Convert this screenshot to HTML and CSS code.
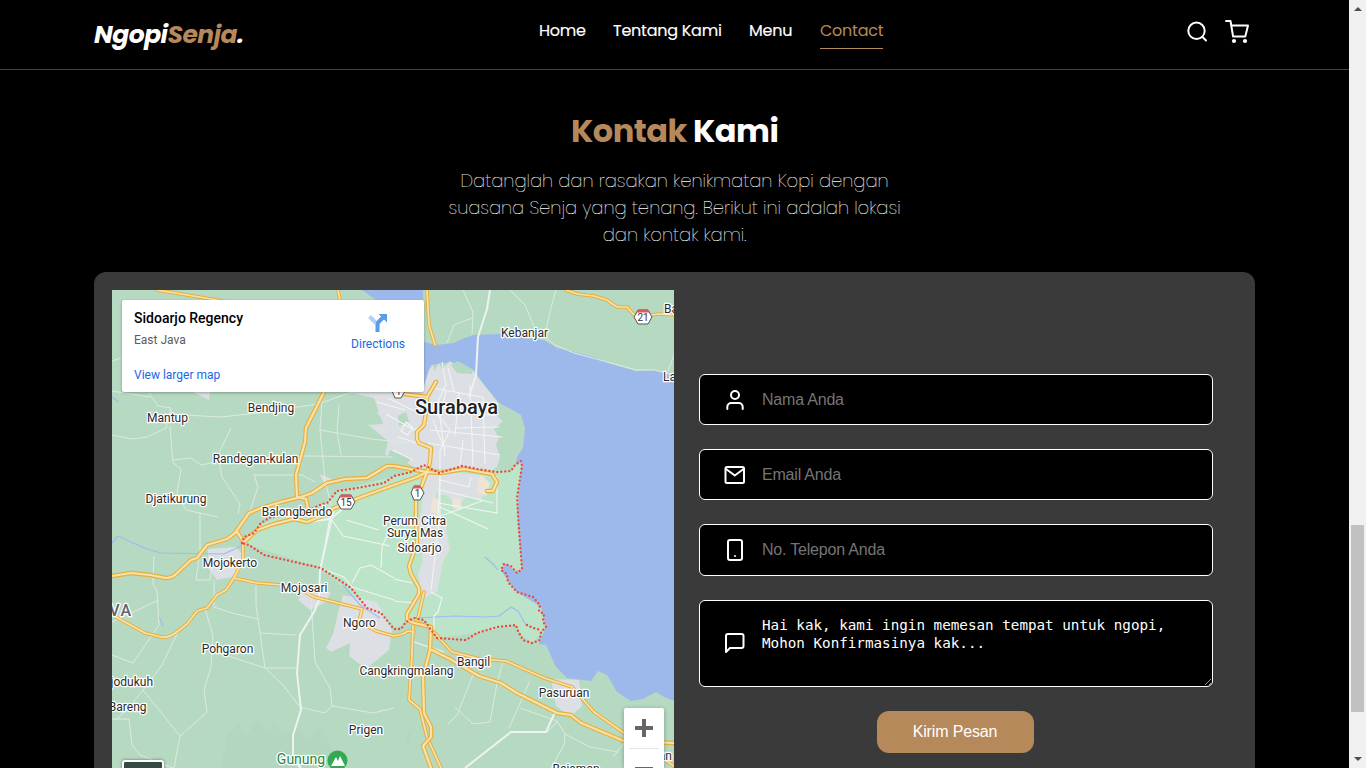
FILE: index.html
```html
<!DOCTYPE html>
<html lang="id">
<head>
<meta charset="utf-8">
<title>NgopiSenja</title>
<link rel="stylesheet" href="styles.css">
</head>
<body>
<div class="page">
  <header class="navbar">
    <a class="logo"><span>Ngopi</span><span class="accent">Senja</span><span>.</span></a>
    <nav class="links">
      <a class="home">Home</a><a class="about">Tentang Kami</a><a class="menu">Menu</a><a class="contact">Contact</a>
    </nav>
    <div class="tools">
      <svg width="24" height="24" viewBox="0 0 24 24" class="icon"><circle cx="10.500" cy="10.800" r="8.200"/><path d="M20 20.500l-3.700-3.800"/></svg>
      <svg width="26" height="26" viewBox="0 0 26 26" class="icon"><path d="M1 2h4.500l2.600 15.500h12.200L23 6.500H6.500"/><circle class="solid" cx="9" cy="22" r="1.100"/><circle class="solid" cx="20" cy="22" r="1.100"/></svg>
    </div>
  </header>
  <main class="section">
    <h2><span class="accent kontak">Kontak</span><span class="kami">Kami</span></h2>
    <p class="intro"><span>Datanglah dan rasakan kenikmatan Kopi dengan</span><span>suasana Senja yang tenang. Berikut ini adalah lokasi</span><span>dan kontak kami.</span></p>
    <div class="card">
      <div class="map">
        <svg class="canvas" width="562" height="478" viewBox="112 290 562 478">
          <defs>
            <g id="highways">
              <path d="M112 576L131 573L150 575L166 578Q173 578 178 572L191 560L197 558L207 545L227 539L235 533L249 513L261 508L281 502L301 497L312 493L327 483L345 479L367 478L387 466H394L427 472L441 473L464 469L492 474L497 482L493 491H487"/>
              <path d="M326 388L306 428L305 442L296 475L297 497L306 499L308 509"/>
              <path d="M237 532L244 542L257 530L274 524L294 519L307 522L325 515L334 508L361 497L394 485L417 477L427 472"/>
              <path d="M436 382L427 397L426 412L424 425L417 432V439L419 443L431 448L430 462L427 472L422 485L416 496V520L417 543L409 566L411 574L419 588V594L407 614V620L414 623L431 627L430 650L423 677L424 713L431 727V737L423 746L431 768M396 393L427 397"/>
              <path d="M432 650L450 659L479 676L501 683L517 693L557 713L571 715L581 723L624 741L674 743"/>
            </g>
            <g id="mainroads">
              <path d="M116 617L145 633L161 637Q170 638 178 631L187 624L197 611L207 608L217 595L226 590L234 578L243 560L243 540M234 578L257 583L294 586L314 597L362 609L359 622L376 631L394 636L403 634L408 631L414 632"/>
              <path d="M431 629L452 652L480 659L506 661L544 678L572 687L594 712L624 733L674 766M413 625L412 655L409 700L420 709L427 737L441 768M424 592L417 622"/>
              <path d="M157 290L217 300L240 305M338 290L341 305M427 290L429 325L435 345M566 290L577 294L594 296L607 300L617 307L627 307L634 315H648L661 314L674 315"/>
            </g>
            <path id="border" d="M242 543L244 537L254 533L261 523L271 517L300 514L322 504L327 503L337 491L357 488L384 483L394 476L411 472L424 465L439 473L462 466L477 469L497 472L511 471L515 465L521 461L522 466L517 498L519 530L522 569L517 573L511 566L504 564L501 570L507 574L508 582L517 592L533 597L540 605L539 611L544 614L543 621L546 627L541 632L540 640L532 643L523 640L518 631L516 625L497 627L477 633L466 640L437 638L429 627L424 620L414 618L406 622L401 629H394L381 613L367 608L351 588L321 568L264 555L249 545ZM527 625L533 628L541 630"/>
          </defs>
          <path class="land" d="M112 290h562v478H112z"/>
          <path class="hill" d="M220 768l8-32 10-12 9 12 10-19 9 15 8-11 8 15 14-9 13 12 12-13 9 18 10 24zM345 650l20-8 11 18-18 5zM404 739l8-11-2 19z"/>
          <path class="sidoarjo" d="M242 543L244 537L254 533L261 523L322 504L337 491L394 476L424 465L439 473L462 466L511 471L521 461L519 530L522 569L501 570L517 592L540 605L546 627L532 643L518 631L516 625L477 633L437 638L424 620L406 622L394 629L367 608L321 568Z"/>
          <path class="water" d="M362 290H423L424 342L436 345L454 343L462 339L474 335L501 334L544 340L557 348L574 352L594 357L611 364L636 371L654 370L674 375V701L664 697L656 692L643 699L631 701L617 692L607 675L598 671L591 681L567 678L556 667L546 645L539 644L546 627L541 607L517 592L506 578L501 570L506 563L517 573L522 570L517 510L522 462L516 464L517 457L523 448L525 428L521 415L507 407L499 403L491 393L482 382L474 370L451 362L431 365L426 380L424 388L400 380L376 300Z"/>
          <path class="city" d="M424 386L429 370L433 365L434 371L439 363L442 369L450 361L456 367L472 370L484 385L499 404L496 415L503 421L494 429L499 438L496 445L500 457L497 467L488 473L414 467L399 458L385 455L388 441L368 425L383 424L374 398L348 392L394 391Z"/>
          <path class="city" d="M426 473L445 471L486 476L482 500L468 496L457 505L449 497L436 492L438 520L445 523L450 549L443 562L437 592L423 598L418 574L423 561L418 533ZM208 549L236 547L246 558L232 577L217 580L208 568ZM302 593L331 592L326 602L310 610L298 600ZM343 595L377 602L392 630L389 650L366 669L349 656L350 643L331 652L326 648L333 634L338 613ZM551 679L579 680L582 706L570 717L556 706ZM193 392h17l-1 8zM320 474l12 5-7 7zM394 397l-17 16 16 16z"/>
          <path class="land" d="M451 365L458 361L472 369V374L457 373ZM398 416l8-4 3 10-10 4zM390 450l21 9-8 8-18-4z"/>
          <path class="sand" d="M480 475l10 8-4 13-10-4zM452 497l10 3-2 10-7-2zM432 497l8 3-2 14-7-2z"/>
          <path class="stream" d="M112 543L118 536L131 542L147 549L161 553L224 554L241 546M415 618L455 616L486 617L499 616L511 607L518 611L526 625M485 557l9 8 4 5M343 585l17 20 20 13M112 397l7 5M159 617l4 9"/>
          <g class="small">
            <path d="M112 361L121 358M112 391L150 397M149 393L158 406L171 408L166 428L147 437L132 439L112 435M184 415L221 417L258 413L318 404L355 391L400 372M231 428L218 455L222 477L240 504L238 514M170 426L173 463L181 469L177 493L186 510L218 517M173 460L191 458L201 465L226 460L288 456L310 456L392 457M254 475L302 475L315 482M254 475L258 487L250 511M322 401L320 430L325 480L331 505M339 405L337 432L341 455M320 430L371 439L409 443"/>
            <path d="M200 512V552L196 580L210 580L212 567M154 556L153 584L157 591L159 625L133 663L112 655M112 622L159 600M178 632L162 665L143 690L128 709L115 720M112 719L129 719L132 745L140 755L173 768M143 690L180 736L174 768M180 736L207 712L204 690L211 667L213 636L205 608M214 580V607L232 613L258 619M256 582V605L265 668L296 668M216 652L265 668L283 685L300 707L325 713L332 706L373 713L394 708M311 600L315 662L330 688L332 706M261 633L296 635"/>
            <path d="M463 290L473 312L472 334M447 343L454 325L472 318M510 290L525 305L535 329L555 345M556 290L551 308L546 330M555 345L574 353L611 363L636 370L654 370L674 375M674 355L668 371M503 662L497 683L490 722L473 724L455 707M448 724L457 715L475 670M530 681L509 728M520 708L557 721L565 734L564 745L551 768M565 734L590 747L618 752M624 743L613 757M557 722L547 732"/>
          </g>
          <g class="street">
            <path d="M430 430L502 437M433 420L445 450M446 391L440 418L445 456M459 392L455 435M470 385L473 465M483 397L485 464M438 407L496 416M428 443L500 455M433 388L482 397M448 368L454 391M386 414L414 430L428 423M388 398L414 411M398 437L417 443M406 422l7 6-5 7-7-4zM377 402l28 8M393 450l20 10M440 480L469 487L471 477M441 490L493 503M438 503L497 513M497 476V514M456 428L499 427M463 440L460 465M346 520L379 530M394 520L382 547L381 568"/>
            <path d="M321 568L330 517L335 510M330 517L343 536L390 546M320 568L344 577L352 587L394 600M352 583L360 568L371 565L394 578M440 476V515L431 590M431 592L442 598L438 612L434 616V630M394 579L412 583M414 642L444 652M416 603L394 601M435 518L482 501M440 507L488 529"/>
            <path d="M442 362L446 385L434 410L450 430L440 451V474L438 518"/>
          </g>
          <path class="avenue" d="M490 290L487 309L478 337L476 375L469 397M320 570L319 600L314 612L300 635L297 673L301 710L293 735V760L301 768M465 768L511 732H546L556 710M307 522L330 519L344 508M334 508L320 570"/>
          <use href="#mainroads" class="casing thin"/><use href="#mainroads" class="fill thin-fill"/>
          <use href="#highways" class="casing"/><use href="#highways" class="fill"/>
          <use href="#border" class="boundary"/>
          <g class="shield">
            <path d="M638 310h10l4 7-4 7h-10l-4-7z"/><path class="red" d="M638 310h10l1 2h-12z"/><text x="643" y="321">21</text>
            <path d="M341 495h10l4 7-4 7h-10l-4-7z"/><path class="red" d="M341 495h10l1 2h-12z"/><text x="346" y="506">15</text>
            <path d="M414 486h6l4 7-4 7h-6l-3-7z"/><path class="red" d="M414 486h6l1 2h-8z"/><text x="417.500" y="497">1</text>
            <path d="M395 384h6l4 7-4 7h-6l-3-7z"/><text x="398.500" y="395">1</text>
          </g>
          <g class="places">
            <text x="524.500" y="337">Kebanjar</text><text x="167.500" y="422">Mantup</text><text x="271" y="412">Bendjing</text><text x="255.500" y="463">Randegan-kulan</text><text x="176" y="503">Djatikurung</text><text x="297" y="516">Balongbendo</text><text x="230" y="567">Mojokerto</text><text x="304" y="592">Mojosari</text><text x="359.500" y="627">Ngoro</text><text x="227.500" y="653">Pohgaron</text><text x="406.500" y="675">Cangkringmalang</text><text x="473.500" y="666">Bangil</text><text x="564" y="697">Pasuruan</text><text x="366" y="734">Prigen</text><text x="414.500" y="525">Perum Citra</text><text x="415" y="537">Surya Mas</text><text x="419.500" y="552">Sidoarjo</text><text x="576" y="773">Bajaman</text>
            <text class="start" x="664" y="313">Ba</text><text class="start" x="663" y="381">La</text><text class="end" x="153" y="686">jodukuh</text><text class="end" x="146.500" y="711">Bareng</text><text class="end" x="672" y="760">an</text>
            <text class="city-name" x="456.500" y="414">Surabaya</text><text class="island end" x="132.500" y="616">VA</text><text class="mountain" x="301" y="764">Gunung</text>
          </g>
          <circle cx="337.500" cy="760.500" r="10" class="peak"/><path class="snow" d="M331 766l5-9 2 4 2-5 5 10z"/>
        </svg>
        <div class="place-card">
          <div><strong>Sidoarjo Regency</strong><span class="region">East Java</span><a>View larger map</a></div>
          <div class="directions"><svg width="20" height="20" viewBox="0 0 20 20"><path d="M1.500 3.500l7 7" stroke="#b3d0f6" stroke-width="4" fill="none"/><path d="M9.500 19v-7q0-2 1.500-3.500L15.500 4" stroke="#5b9be8" stroke-width="4" fill="none"/><path d="M10.500 1H19v8.500z" fill="#5b9be8"/></svg><a>Directions</a></div>
        </div>
        <div class="zoom"><svg width="40" height="60" viewBox="0 0 40 60"><path d="M20 11v18M11 20h18M11 61h18" stroke="#666" stroke-width="4"/><path d="M5 40.500h30" stroke="#e6e6e6"/></svg></div>
        <div class="satellite"></div>
      </div>
      <form class="form">
        <label class="field"><svg width="24" height="24" viewBox="0 0 24 24" class="icon"><path d="M19.700 21v-2a4 4 0 0 0-4-4H8.300a4 4 0 0 0-4 4v2"/><circle cx="12" cy="7" r="4"/></svg><input placeholder="Nama Anda"></label>
        <label class="field"><svg width="24" height="24" viewBox="0 0 24 24" class="icon"><rect x="2.500" y="4" width="18.500" height="16" rx="1.500"/><path d="M20.500 6l-8.700 6.500L3 6"/></svg><input placeholder="Email Anda"></label>
        <label class="field phone"><svg width="24" height="24" viewBox="0 0 24 24" class="icon"><rect x="5" y="2" width="14" height="20" rx="2"/><path d="M12 18h.01"/></svg><input placeholder="No. Telepon Anda"></label>
        <div class="field message"><svg width="24" height="24" viewBox="0 0 24 24" class="icon"><path d="M20.500 14a2 2 0 0 1-2 2H7l-4 4V4a2 2 0 0 1 2-2h13.500a2 2 0 0 1 2 2z"/></svg><textarea spellcheck="false">Hai kak, kami ingin memesan tempat untuk ngopi,
Mohon Konfirmasinya kak...</textarea></div>
        <button type="button">Kirim Pesan</button>
      </form>
    </div>
  </main>
</div>
<div class="scrollbar"><i class="up"></i><i class="thumb"></i><i class="down"></i></div>
</body>
</html>
```

FILE: styles.css
```css
* { box-sizing: border-box; }
body { margin: 0; width: 1366px; height: 768px; overflow: hidden; display: flex; background: #000; color: #fff; font-family: Poppins, Inter, sans-serif; }
.page { width: 1349px; height: 768px; overflow: hidden; }
.accent { color: #b6895b; }
.icon { fill: none; stroke: #fff; stroke-width: 2; stroke-linecap: round; stroke-linejoin: round; flex: none; }
.icon .solid { fill: #fff; }

.navbar { height: 70px; border-bottom: 1px solid #513d28; padding: 0 98px 0 94px; display: flex; justify-content: space-between; }
.logo { width: 149px; padding-top: 17px; font-size: 25px; line-height: 36px; font-weight: 700; font-style: italic; display: flex; letter-spacing: -.52px; }
.links { display: flex; font-size: 16px; line-height: 24px; padding: 19px 7px 0 0; letter-spacing: -.25px; -webkit-text-stroke: .15px #fff; }
.links a { height: 30px; white-space: nowrap; margin-right: 27px; }
.links .home { width: 47px; }
.links .about { width: 109px; }
.links .menu { width: 43px; margin-right: 28px; }
.links .contact { width: 63px; margin-right: 0; color: #b6895b; border-bottom: 1px solid #b6895b; -webkit-text-stroke: 0; }
.tools { display: flex; gap: 15px; padding-top: 19px; }
.tools svg:first-child { margin-top: 1px; }

h2 { margin: 0; padding-top: 37px; height: 97px; font-size: 32px; line-height: 48px; font-weight: 700; letter-spacing: -.5px; display: flex; justify-content: center; gap: 7px; }
.kontak { width: 115px; }
.kami { width: 85px; }
.intro { margin: 0; height: 105px; display: flex; flex-direction: column; align-items: center; font-size: 18px; line-height: 27px; font-weight: 200; color: #fff; white-space: nowrap; -webkit-text-stroke: .1px #fff; }

.card { margin: 0 94px; height: 560px; padding: 18px; background: #3a3a3a; border-radius: 12px; display: flex; }
.map { position: relative; width: 562px; height: 478px; flex: none; overflow: hidden; font-family: Roboto, sans-serif; }
.canvas { display: block; }
.land { fill: #b6d9c2; }
.hill { fill: #acd2bb; opacity: .3; }
.sidoarjo { fill: #bce4c9; }
.water { fill: #9db9ec; }
.city { fill: #dcdfe3; }
.sand { fill: #eee4d5; }
.stream, .small, .street, .avenue { fill: none; stroke-linejoin: round; }
.stream { stroke: #9dbcf0; stroke-width: 1.2; }
.small { stroke: #dcebe2; stroke-width: 1; }
.street { stroke: #f2f5f4; stroke-width: 1.1; }
.avenue { stroke: #edf3f0; stroke-width: 2; }
.casing, .fill { fill: none; stroke-linejoin: round; stroke-linecap: round; }
.casing { stroke: #e9ae37; stroke-width: 4.4; }
.fill { stroke: #f8e2ac; stroke-width: 2.2; }
.thin { stroke-width: 3.6; }
.thin-fill { stroke-width: 1.7; }
.boundary { fill: none; stroke: #ea4b3f; stroke-width: 2.4; stroke-linecap: round; stroke-dasharray: 0 4; }
.shield path { fill: #fff; stroke: #555; stroke-width: 1; }
.shield .red { fill: #d95c5c; stroke: #d95c5c; }
.shield text { font-size: 10px; fill: #333; text-anchor: middle; }
.places text { font-size: 12px; fill: #2b2b2b; text-anchor: middle; stroke: #fff; stroke-width: 2.5px; stroke-linejoin: round; paint-order: stroke; }
.places .start { text-anchor: start; }
.places .end { text-anchor: end; }
.places .city-name { font-size: 20px; font-weight: 500; fill: #202124; }
.places .island { font-size: 16px; font-weight: 500; letter-spacing: 1.5px; fill: #606368; }
.places .mountain { font-size: 14px; fill: #25883c; }
.peak { fill: #34a853; }
.snow { fill: #fff; }

.place-card { position: absolute; left: 10px; top: 10px; width: 302px; height: 92px; background: #fff; border-radius: 2px; box-shadow: 0 1px 3px rgba(0,0,0,.3); padding: 9px 19px 0 12px; display: flex; justify-content: space-between; font-size: 12px; line-height: 18px; color: #1a66e8; }
.place-card > div { display: flex; flex-direction: column; }
.place-card strong { font-size: 14px; font-weight: 500; color: #000; }
.region { color: #5b5b5b; margin: 4px 0 17px; }
.directions { align-items: center; padding-top: 4px; gap: 2px; }
.zoom { position: absolute; left: 512px; top: 418px; width: 40px; height: 60px; background: #fff; border-radius: 2px 2px 0 0; box-shadow: 0 1px 4px rgba(0,0,0,.3); }
.satellite { position: absolute; left: 10px; top: 470px; width: 42px; height: 10px; border: 2px solid #fff; border-radius: 3px 3px 0 0; background: #354b42; box-shadow: 0 0 3px rgba(0,0,0,.5); }

.form { padding: 84px 0 0 25px; width: 539px; display: flex; flex-direction: column; align-items: center; gap: 24px; }
.field { width: 514px; height: 51px; background: #000; border: 1px solid #fff; border-radius: 6px; display: flex; align-items: center; padding-left: 23px; }
.field.phone { height: 52px; }
.field.message { height: 87px; }
.field input { border: 0; outline: 0; background: none; padding: 0; margin-left: 15px; width: 420px; font: 16px "Liberation Sans", Arial, sans-serif; letter-spacing: -.2px; color: #fff; }
.field input::placeholder { color: #757575; }
.field textarea { align-self: stretch; flex: 1; border: 0; outline: 0; background: none; color: #fff; padding: 15px 0 0 15px; font: 14.25px/18px Consolas, "DejaVu Sans Mono", monospace; }
button { width: 157px; height: 42px; margin-right: 2px; border: 0; border-radius: 12px; background: #b6895b; color: #fff; font: 16px "Liberation Sans", Arial, sans-serif; letter-spacing: -.15px; padding: 0; }

.scrollbar { width: 17px; height: 768px; background: #f1f1f1; display: flex; flex-direction: column; align-items: center; }
.scrollbar i { flex: none; }
.up { margin-top: 7px; border: 4px solid transparent; border-top: 0; border-bottom-color: #505050; }
.thumb { margin-top: 514px; width: 13px; height: 187px; background: #c1c1c1; }
.down { margin-top: 45px; border: 4px solid transparent; border-bottom: 0; border-top-color: #505050; }
```
